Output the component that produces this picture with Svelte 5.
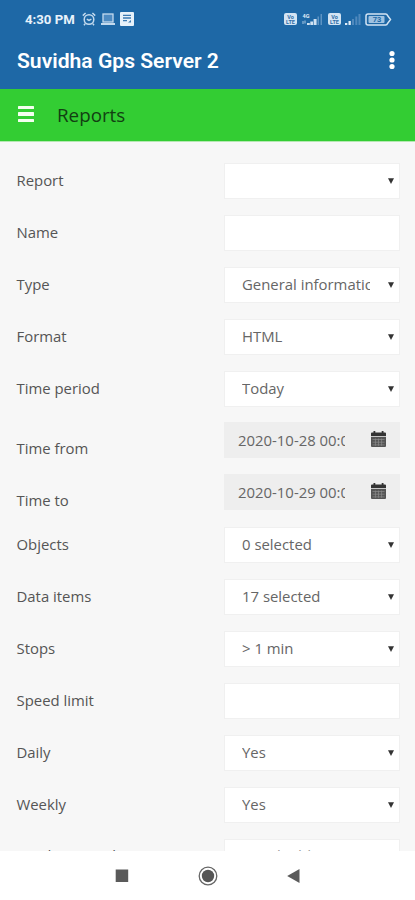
<script lang="ts">
  type Row = { label: string; kind: 'select' | 'input' | 'date'; value?: string; placeholder?: string };

  const rows: Row[] = [
    { label: 'Report', kind: 'select', value: '' },
    { label: 'Name', kind: 'input' },
    { label: 'Type', kind: 'select', value: 'General information' },
    { label: 'Format', kind: 'select', value: 'HTML' },
    { label: 'Time period', kind: 'select', value: 'Today' },
    { label: 'Time from', kind: 'date', value: '2020-10-28 00:00' },
    { label: 'Time to', kind: 'date', value: '2020-10-29 00:00' },
    { label: 'Objects', kind: 'select', value: '0 selected' },
    { label: 'Data items', kind: 'select', value: '17 selected' },
    { label: 'Stops', kind: 'select', value: '> 1 min' },
    { label: 'Speed limit', kind: 'input' },
    { label: 'Daily', kind: 'select', value: 'Yes' },
    { label: 'Weekly', kind: 'select', value: 'Yes' },
    { label: 'Send to e-mail', kind: 'input', placeholder: 'E-mail address' },
  ];
</script>

{#snippet volte()}
  <svg class="volte" width="13" height="12" viewBox="0 0 13 12">
    <rect width="13" height="12" rx="2" fill="#d3e4f4" />
    <text x="6.5" y="5.7" text-anchor="middle">Vo</text>
    <text x="6.5" y="10.7" text-anchor="middle">LTE</text>
  </svg>
{/snippet}

<div class="phone">
  <header class="appbar">
    <div class="status">
      <span class="clock">4:30 PM</span>
      <svg class="alarm" width="14" height="14" viewBox="0 0 14 14" fill="none" stroke="#c3daee" stroke-width="1.5">
        <circle cx="7" cy="7.5" r="4.8" />
        <path d="M.8 3.6 3.6 1M13.2 3.6 10.4 1M3.2 11.6 2 13.2M10.8 11.6 12 13.2M4.8 7.2 7 8.4 9.4 7.2" />
      </svg>
      <svg class="laptop" width="14" height="12" viewBox="0 0 14 12">
        <rect x="2" y="1" width="10" height="8" fill="#4d8bc2" stroke="#c3daee" stroke-width="1.3" />
        <path d="M0 10h14v2H0z" fill="#c3daee" />
      </svg>
      <svg class="note" width="14" height="14" viewBox="0 0 14 14">
        <rect width="14" height="14" rx="1" fill="#e6f1fa" />
        <path d="M3 3.4h8M3 6h8M3 8.6h4" stroke="#3b7ab2" stroke-width="1.4" />
        <path d="M8 10.5 11 8v2.5z" fill="#3b7ab2" />
      </svg>
      <div class="signals">
        {@render volte()}
        <svg class="bars" width="22" height="13" viewBox="0 0 22 13">
          <text x="1.5" y="5.2" fill="#e1edf8">4G</text>
          <path d="M2 8v3M4 7.5v3" stroke="#a9c8e3" />
          <path d="M6 10h2.8v2H6zM9.3 8.5H12V12H9.3zM12.6 6h3v6h-3z" fill="#cfe2f3" />
          <path d="M16.5 3.5H18V12h-1.5zM19.5 1H21v11h-1.5z" fill="#5d93c3" />
        </svg>
        {@render volte()}
        <svg class="bars two" width="17" height="13" viewBox="0 0 17 13">
          <path d="M1 10h2.3v2H1zM4.5 8h2.3v4H4.5z" fill="#e1edf8" />
          <path d="M8 6h2v6H8zM11.3 3.5h2V12h-2zM14.5 1h2v11h-2z" fill="#5089bd" />
        </svg>
        <svg class="battery" width="27" height="13" viewBox="0 0 27 13">
          <path d="M3 1h17.5a2 2 0 0 1 2 1.5l3 4-3 4a2 2 0 0 1-2 1.5H3a2 2 0 0 1-2-2V3a2 2 0 0 1 2-2z" fill="none" stroke="#d3e4f4" stroke-width="1.5" />
          <rect x="3.5" y="3" width="16" height="7" rx="1" fill="#9fc2e1" />
          <text x="12" y="9.4" text-anchor="middle">73</text>
        </svg>
      </div>
    </div>
    <div class="title">
      <h1>Suvidha Gps Server 2</h1>
      <svg width="6" height="20" viewBox="0 0 6 20" fill="#fff">
        <circle cx="3" cy="3.5" r="2.6" />
        <circle cx="3" cy="10" r="2.6" />
        <circle cx="3" cy="16.5" r="2.6" />
      </svg>
    </div>
  </header>

  <div class="toolbar">
    <div class="burger"><i></i><i></i><i></i></div>
    <h2>Reports</h2>
  </div>

  <main>
    {#each rows as row}
      <div class="row {row.kind}">
        <span class="label">{row.label}</span>
        <div class="field">
          <span class="value" class:placeholder={row.placeholder}>{row.value ?? row.placeholder ?? ''}</span>
          {#if row.kind === 'select'}
            <svg class="arrow" width="6" height="6" viewBox="0 0 6 6"><path d="M0 .2h6L3 6z" fill="#333" /></svg>
          {:else if row.kind === 'date'}
            <svg class="calendar" width="15" height="16" viewBox="0 0 15 16">
              <path d="M2.5 0h1.8v1.5h6.4V0h1.8v1.5H14a1 1 0 0 1 1 1V5H0V2.5a1 1 0 0 1 1-1h1.5z" fill="#333" />
              <path d="M0 5.8h15V15a1 1 0 0 1-1 1H1a1 1 0 0 1-1-1z" fill="#555" />
              <path d="M1.5 8.5h12M1.5 11.2h12M1.5 13.9h12M4.4 7.5v7.3M7.5 7.5v7.3M10.6 7.5v7.3" stroke="#8c8c8c" stroke-width=".7" />
            </svg>
          {/if}
        </div>
      </div>
    {/each}
  </main>

  <nav>
    <svg width="14" height="14" viewBox="0 0 14 14"><rect x=".7" y=".5" width="12.5" height="12.5" fill="#5a5a5a" /></svg>
    <svg width="20" height="20" viewBox="0 0 20 20">
      <circle cx="10" cy="10" r="8.8" fill="none" stroke="#666" stroke-width="1.3" />
      <circle cx="10" cy="10" r="6.2" fill="#555" />
    </svg>
    <svg width="14" height="14" viewBox="0 0 14 14"><path d="M12.5 0v14L.2 7z" fill="#5a5a5a" /></svg>
  </nav>
</div>

<style>
  .phone {
    display: flex;
    flex-direction: column;
    width: 415px;
    height: 900px;
    overflow: hidden;
    background: #fff;
    font-family: "Open Sans", "Noto Sans", sans-serif;
  }
  svg {
    display: block;
    flex: none;
  }
  .appbar {
    flex: none;
    height: 89px;
    background: #1e68a6;
    color: #fff;
    font-family: Roboto, sans-serif;
  }
  .status {
    display: flex;
    align-items: center;
    height: 38px;
    padding: 0 22px 0 25px;
  }
  .clock {
    width: 57px;
    font-size: 13.2px;
    font-weight: 700;
    color: #e8f2fb;
    white-space: nowrap;
  }
  .laptop {
    margin-left: 5px;
  }
  .note {
    margin-left: 5px;
  }
  .signals {
    display: flex;
    align-items: center;
    margin-left: auto;
  }
  .signals text {
    font-size: 5.5px;
    font-weight: 700;
  }
  .volte text {
    fill: #2d6da6;
  }
  .bars {
    margin: 0 5px 0 4px;
  }
  .bars.two {
    margin: 0 4px 0 3px;
  }
  .battery {
    margin-right: 1px;
  }
  .battery text {
    font-size: 7.5px;
    fill: #1e68a6;
  }
  .title {
    display: flex;
    align-items: center;
    justify-content: space-between;
    height: 44px;
    padding: 0 20px 0 17px;
  }
  h1 {
    margin: 0;
    font-size: 21.1px;
    font-weight: 600;
  }
  .toolbar {
    display: flex;
    align-items: center;
    flex: none;
    height: 52px;
    padding-left: 18px;
    border-bottom: 1px solid #b5e8b2;
    background: #33cd33;
  }
  .burger {
    display: grid;
    gap: 3px;
    width: 16px;
    margin: 0 23px 2px 0;
  }
  .burger i {
    height: 3.5px;
    border-radius: 0.5px;
    background: #f4fff0;
  }
  h2 {
    margin: 0;
    font-size: 18.8px;
    font-weight: 400;
    color: #123f12;
  }
  main {
    flex: none;
    box-sizing: border-box;
    height: 709px;
    padding-top: 13px;
    overflow: hidden;
    background: #f7f7f7;
  }
  .row {
    display: flex;
    align-items: center;
    justify-content: space-between;
    height: 52px;
    padding: 0 15px 0 16.5px;
    font-size: 14.9px;
    color: #555;
  }
  .label {
    padding-bottom: 2px;
  }
  .date .label {
    padding-top: 13px;
    padding-bottom: 0;
  }
  .row:last-child .label {
    padding-bottom: 4px;
  }
  .field {
    display: flex;
    align-items: center;
    box-sizing: border-box;
    width: 176px;
    height: 36px;
    border: 1px solid #f0f0f0;
    background: #fff;
    color: #666;
  }
  .value {
    width: 128px;
    margin-left: 17px;
    padding-bottom: 2px;
    overflow: hidden;
    white-space: nowrap;
  }
  .value.placeholder {
    padding-bottom: 4px;
    color: #999;
  }
  .input .value,
  .date .value {
    margin-left: 13px;
  }
  .arrow {
    margin-left: 18px;
  }
  .date .field {
    margin-bottom: 2px;
    border-color: #eee;
    background: #eee;
  }
  .date .value {
    width: 107px;
    padding-bottom: 0;
  }
  .calendar {
    margin: 0 0 3px 26px;
  }
  nav {
    display: flex;
    align-items: center;
    justify-content: center;
    gap: 69px;
    flex: 1;
  }
</style>
